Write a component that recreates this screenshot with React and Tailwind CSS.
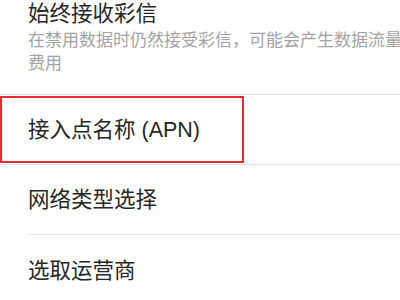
export default function App() {
  const font = { fontFamily: '"Liberation Sans", "Noto Sans CJK SC", sans-serif' };
  return (
    <div className="w-[400px] h-[300px] overflow-hidden bg-white text-[#262626]" style={font}>
      {/* 始终接收彩信 */}
      <div className="pl-[28px] pb-[19px] border-b border-[#e6e6e6]">
        <div className="text-[21.5px] leading-[28px]">始终接收彩信</div>
        <div className="mt-[1px] text-[17px] leading-[23px] text-[#a3a3a3] whitespace-nowrap">
          在禁用数据时仍然接受彩信，可能会产生数据流量
          <br />
          费用
        </div>
      </div>

      {/* 接入点名称 */}
      <div className="relative h-[70px] flex items-center pl-[28px] border-b border-[#e6e6e6]">
        <span className="text-[21.5px] leading-[28px] mt-[1px]">接入点名称 (APN)</span>
        <div className="absolute left-0 top-[1px] w-[244px] h-[67px] border-2 border-[#ec2a30]" />
      </div>

      <div className="ml-[28px] h-[70px] flex items-center border-b border-[#e6e6e6]">
        <span className="text-[21.5px] leading-[28px] mt-[1px]">网络类型选择</span>
      </div>

      <div className="pl-[28px] h-[70px] flex items-center">
        <span className="text-[21.5px] leading-[28px] mt-[1px]">选取运营商</span>
      </div>
    </div>
  );
}
